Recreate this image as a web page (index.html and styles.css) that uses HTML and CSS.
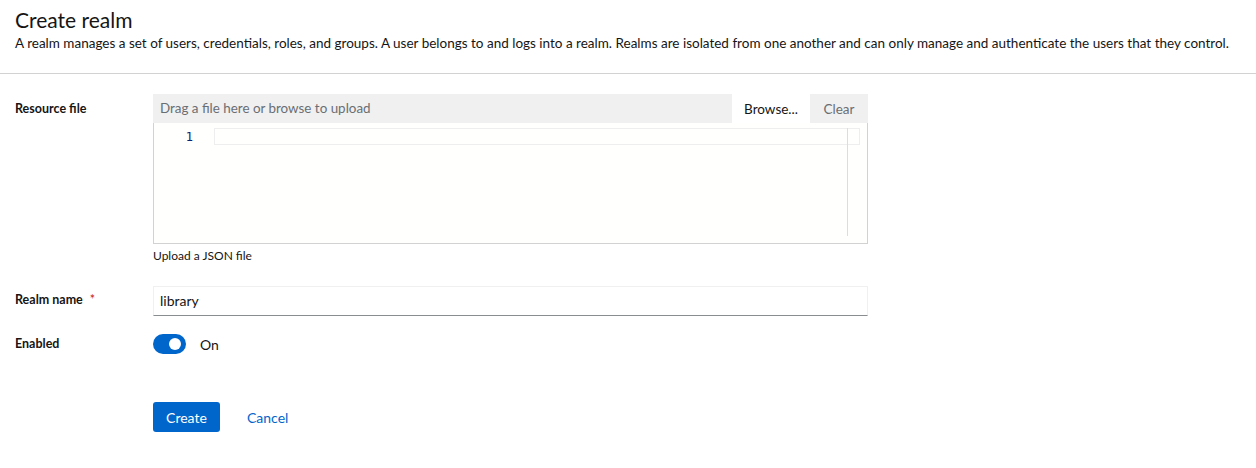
FILE: index.html
```html
<!DOCTYPE html>
<html lang="en">
<head>
<meta charset="utf-8">
<title>Create realm</title>
<link rel="stylesheet" href="styles.css">
</head>
<body>
<header class="page-header">
  <h1 class="title">Create realm</h1>
  <p class="desc">A realm manages a set of users, credentials, roles, and groups. A user belongs to and logs into a realm. Realms are isolated from one another and can only manage and authenticate the users that they control.</p>
</header>
<main class="form">
  <div class="row row-file">
    <div class="label">Resource file</div>
    <div class="control">
      <div class="upload">
        <div class="upload-bar">
          <div class="upload-placeholder">Drag a file here or browse to upload</div>
          <button class="btn-browse" type="button">Browse...</button>
          <button class="btn-clear" type="button">Clear</button>
        </div>
        <div class="editor">
          <div class="gutter">1</div>
          <div class="lines">
            <div class="current-line"></div>
          </div>
          <div class="scroll-track"></div>
        </div>
      </div>
      <div class="helper">Upload a JSON file</div>
    </div>
  </div>
  <div class="row row-name">
    <div class="label">Realm name <span class="req">*</span></div>
    <div class="control">
      <div class="text-input">library</div>
    </div>
  </div>
  <div class="row row-enabled">
    <div class="label">Enabled</div>
    <div class="control switch-wrap">
      <span class="switch"><span class="knob"></span></span>
      <span class="switch-label">On</span>
    </div>
  </div>
  <div class="row row-actions">
    <div class="label"></div>
    <div class="control actions">
      <button class="btn-primary" type="button">Create</button>
      <button class="btn-link" type="button">Cancel</button>
    </div>
  </div>
</main>
</body>
</html>
```
FILE: styles.css
```css
* { box-sizing: border-box; }
body {
  margin: 0;
  font-family: Lato, "Open Sans", sans-serif;
  color: #151515;
  background: #fff;
  width: 1256px;
  height: 468px;
  overflow: hidden;
}
.page-header {
  padding: 7px 15px 0 15px;
  height: 74px;
  border-bottom: 1px solid #d2d2d2;
}
.title {
  margin: 0;
  font-size: 21px;
  font-weight: 400;
  line-height: 26px;
}
.desc {
  margin: 0;
  font-size: 13.5px;
  line-height: 20px;
  white-space: nowrap;
}
.form {
  padding: 20px 15px 0 15px;
  display: flex;
  flex-direction: column;
}
.row {
  display: flex;
}
.label {
  width: 138px;
  flex: none;
  font-size: 12.5px;
  font-weight: 700;
  line-height: 18px;
}
.req { color: #c9190b; margin-left: 4px; font-weight: 400; }
.control { width: 715px; }
.row-file .label { padding-top: 6px; }
.upload {
  display: flex;
  flex-direction: column;
}
.upload-bar {
  display: flex;
  height: 29px;
  background: #f0f0f0;
}
.upload-placeholder {
  flex: 1;
  padding: 0 7px;
  font-size: 13.4px;
  line-height: 29px;
  color: #6a6e73;
}
.btn-browse, .btn-clear {
  border: 0;
  font-family: inherit;
  font-size: 13.5px;
  height: 29px;
  padding: 0;
  cursor: pointer;
}
.btn-browse {
  width: 78px;
  background: #fff;
  color: #151515;
}
.btn-clear {
  width: 58px;
  background: #f0f0f0;
  color: #6a6e73;
}
.editor {
  position: relative;
  height: 121px;
  border: 1px solid #d2d2d2;
  border-top: 0;
  background: #fffffd;
  display: flex;
}
.gutter {
  width: 60px;
  flex: none;
  text-align: right;
  padding: 6px 21px 0 0;
  font-family: "DejaVu Sans Mono", monospace;
  font-size: 12px;
  line-height: 16px;
  color: #0b216f;
}
.lines {
  flex: 1;
  padding: 5px 7px 0 0;
}
.current-line {
  height: 17px;
  border: 1px solid #eeeeee;
}
.scroll-track {
  position: absolute;
  right: 19px;
  top: 5px;
  width: 1px;
  height: 108px;
  background: #dddddd;
}
.helper {
  margin-top: 4px;
  font-size: 12px;
  line-height: 16px;
}
.row-name { margin-top: 22px; }
.row-name .label { padding-top: 5px; }
.text-input {
  height: 30px;
  border: 1px solid #f0f0f0;
  border-bottom: 1px solid #8a8d90;
  padding: 0 6px;
  font-size: 14px;
  line-height: 28px;
}
.row-enabled { margin-top: 19px; }
.switch-wrap { display: flex; align-items: center; height: 20px; margin-top: -1px; }
.switch {
  position: relative;
  width: 33px;
  height: 20px;
  border-radius: 10px;
  background: #0066cc;
  flex: none;
}
.knob {
  position: absolute;
  right: 5px;
  top: 4px;
  width: 12px;
  height: 12px;
  border-radius: 50%;
  background: #fff;
}
.switch-label {
  margin-left: 14px;
  font-size: 14px;
  color: #151515;
}
.row-actions { margin-top: 48px; }
.actions { display: flex; align-items: center; }
.btn-primary {
  width: 67px;
  height: 30px;
  border: 0;
  border-radius: 3px;
  background: #0066cc;
  color: #fff;
  font-family: inherit;
  font-size: 14px;
}
.btn-link {
  margin-left: 27px;
  border: 0;
  padding: 0;
  background: none;
  color: #0066cc;
  font-family: inherit;
  font-size: 14px;
}
```
